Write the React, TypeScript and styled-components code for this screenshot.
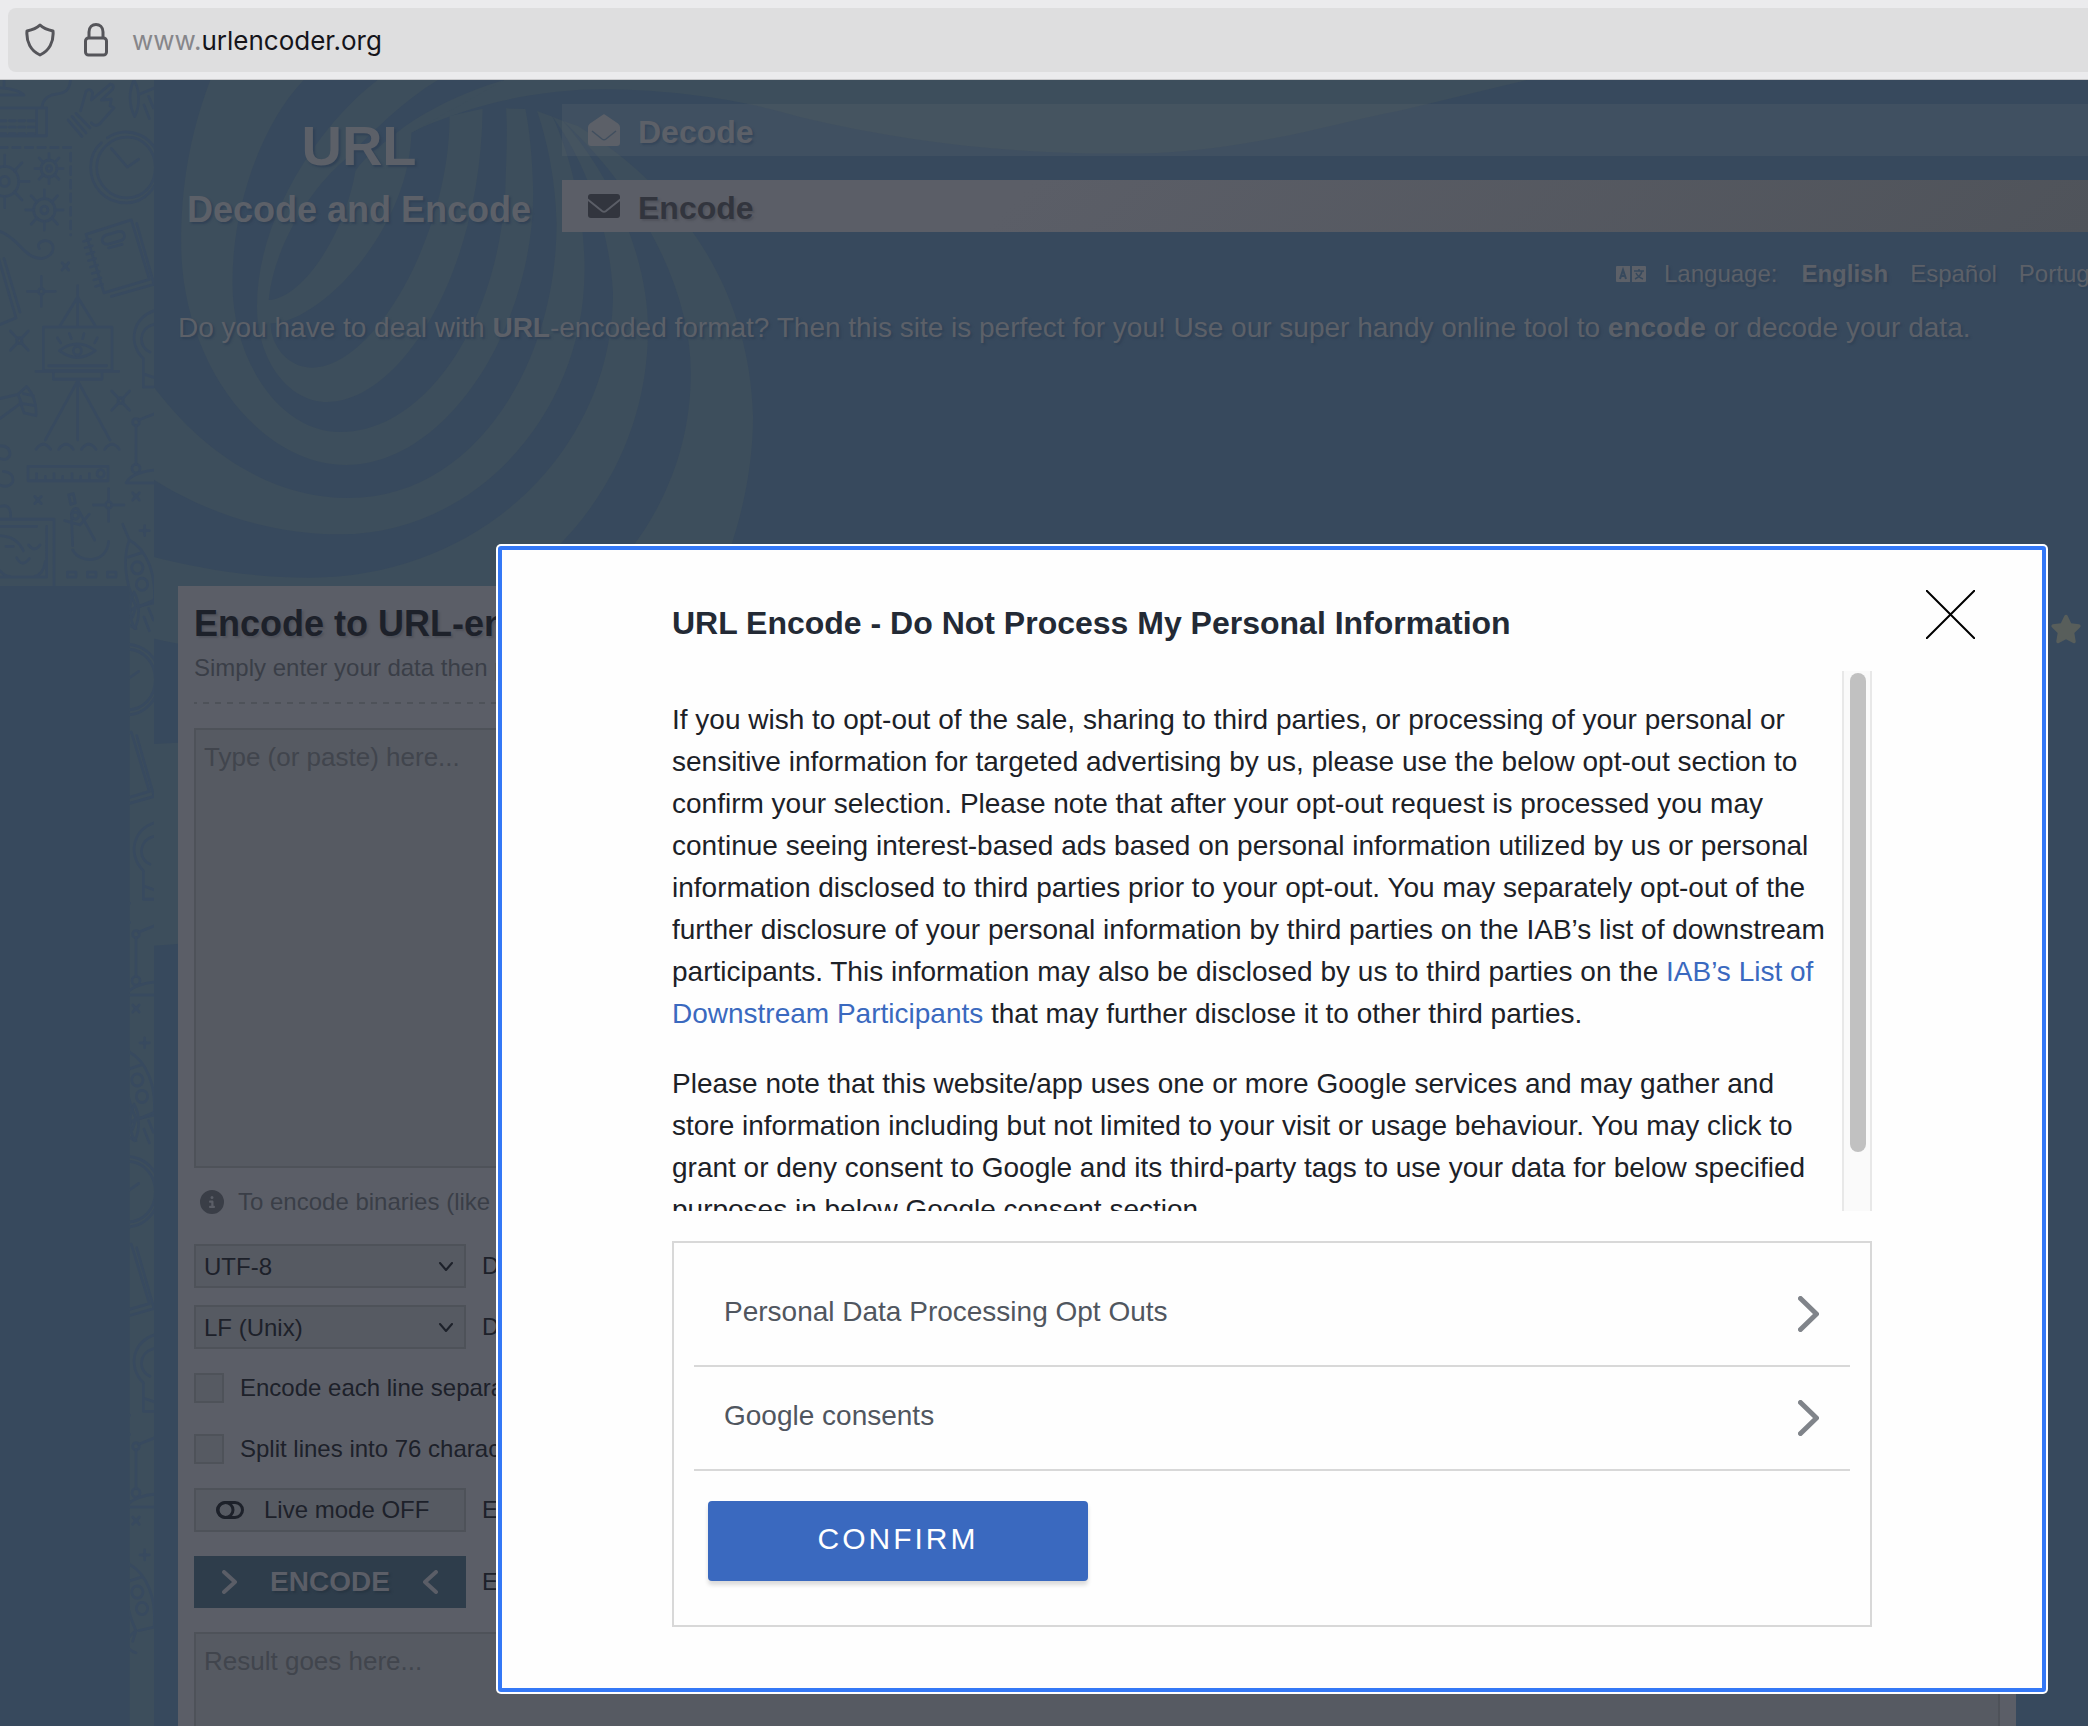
import React from "react";
import styled, { createGlobalStyle } from "styled-components";
import { FaCircleInfo, FaStar } from "react-icons/fa6";

const c = {
  page: "#37495d",
  art: "#3d4e5c",
  artLine: "#384a5f",
  panel: "#5b5e67",
  field: "#565a62",
  line: "#4e5259",
  muted: "#5c6068",
  shadow: "#314256",
  ink: "#1d212a",
  soft: "#3a3e47",
  placeholder: "#41454d",
  blue: "#3a69bf",
  rule: "#d8d8d8",
};

const GlobalStyle = createGlobalStyle`
  *, *::before, *::after { box-sizing: border-box; }
  html, body, #root { height: 100%; }
  body { margin: 0; overflow: hidden; font-family: "Liberation Sans", Arial, sans-serif; }
  h1, h2, p { margin: 0; }
  button, input, select, textarea { font: inherit; margin: 0; border-radius: 0; }
`;

const Window = styled.div`
  display: flex;
  flex-direction: column;
  height: 100vh;
`;

/* Browser bar */
const Toolbar = styled.div`
  flex: none;
  height: 80px;
  padding: 8px 0 7px 8px;
  background: #ebebed;
  border-bottom: 1px solid #c9c9cb;
`;
const AddressBox = styled.div`
  display: flex;
  align-items: center;
  height: 64px;
  padding-left: 17px;
  background: #dededf;
  border-radius: 8px 0 0 8px;
`;
const BarIcon = styled.svg`
  flex: none;
  fill: none;
  stroke: #55555a;
  stroke-width: 3;
  stroke-linejoin: round;
`;
const Address = styled.div`
  padding: 2px 0 0 24px;
  font-family: Inter, "Liberation Sans", sans-serif;
  font-size: 26px;
  line-height: 32px;
  color: #15141a;
`;
const Sub = styled.span`
  color: #86868a;
`;

/* Site */
const Site = styled.div`
  position: relative;
  flex: 1;
  min-height: 0;
  overflow: hidden;
  background: ${c.page};
`;
const Swirl = styled.svg`
  position: absolute;
  top: 0;
  left: 150px;
`;
const Doodles = styled.svg`
  position: absolute;
  top: 0;
  left: 0;
`;
const Content = styled.div`
  position: relative;
  padding: 24px 0 0 178px;
  white-space: nowrap;
`;
const Header = styled.header`
  display: flex;
  gap: 22px;
`;
const Brand = styled.div`
  flex: none;
  display: flex;
  flex-direction: column;
  align-items: center;
  gap: 10px;
  width: 362px;
  padding-top: 10px;
  font-weight: bold;
  color: ${c.muted};
  text-shadow: 2px 2px 2px ${c.shadow};
`;
const BrandName = styled.div`
  font-size: 56px;
  line-height: 64px;
`;
const BrandTag = styled.div`
  font-size: 36px;
  line-height: 44px;
`;
const Nav = styled.nav`
  flex: 1;
  display: flex;
  flex-direction: column;
  gap: 24px;
`;
const NavLink = styled.a<{ $active?: boolean }>`
  display: flex;
  align-items: center;
  gap: 18px;
  height: 52px;
  padding-left: 26px;
  font-size: 32px;
  line-height: 40px;
  font-weight: bold;
  text-decoration: none;
  color: ${(p) => (p.$active ? "#32353e" : c.muted)};
  background: ${(p) =>
    p.$active ? "linear-gradient(135deg, #5b5e67 0%, #5b5e67 30%, #4f535a 100%)" : "rgba(130, 130, 130, 0.12)"};
  text-shadow: 2px 2px 2px ${(p) => (p.$active ? "#50535c" : "#35465a")};
  span { padding-top: 4px; }
`;
const Languages = styled.div`
  display: flex;
  align-items: center;
  gap: 22px;
  width: 472px;
  margin: 26px 0 0 auto;
  overflow: hidden;
  font-size: 24px;
  line-height: 32px;
  color: ${c.muted};
  text-shadow: 2px 2px 2px ${c.shadow};
`;
const LanguageTitle = styled.span`
  display: flex;
  align-items: center;
  gap: 18px;
  padding-right: 2px;
`;
const LanguageLink = styled.a<{ $active?: boolean }>`
  color: inherit;
  text-decoration: none;
  font-weight: ${(p) => (p.$active ? "bold" : "normal")};
`;
const Intro = styled.p`
  margin: 20px 0 240px;
  font-size: 28px;
  line-height: 36px;
  color: ${c.muted};
  text-shadow: 2px 2px 2px ${c.shadow};
`;
const Main = styled.div`
  display: flex;
  gap: 34px;
`;
const Aside = styled.div`
  flex: none;
  width: 38px;
  padding-top: 26px;
  color: #585e5b;
  svg { display: block; width: 32px; height: 34px; }
`;
const Panel = styled.main`
  flex: 1;
  min-width: 0;
  padding: 16px;
  background: ${c.panel};
  color: ${c.ink};
`;
const PanelTitle = styled.h1`
  font-size: 36px;
  line-height: 44px;
  text-shadow: 2px 2px 2px #50535c;
`;
const PanelNote = styled.p`
  padding-top: 6px;
  font-size: 24px;
  line-height: 32px;
  color: ${c.soft};
`;
const Dashes = styled.div`
  height: 2px;
  margin: 18px 0 24px;
  background: repeating-linear-gradient(90deg, ${c.line} 0 6px, transparent 6px 12px) -3px 0;
`;
const TextField = styled.textarea`
  display: block;
  width: 100%;
  height: 440px;
  padding: 10px 8px;
  border: 2px solid ${c.line};
  background: ${c.field};
  color: ${c.ink};
  font-size: 26px;
  line-height: 34px;
  resize: none;
  outline: none;
  &::placeholder { color: ${c.placeholder}; opacity: 1; }
`;
const Info = styled.p`
  display: flex;
  align-items: center;
  gap: 14px;
  margin: 18px 0 26px;
  padding-left: 6px;
  font-size: 24px;
  line-height: 32px;
  color: ${c.soft};
`;
const Options = styled.div`
  display: grid;
  gap: 17px;
  margin-bottom: 24px;
  font-size: 24px;
`;
const Row = styled.div`
  display: flex;
  align-items: center;
  gap: 16px;
  min-height: 44px;
  font-size: 24px;
`;
const SelectWrap = styled.div`
  position: relative;
  width: 272px;
  svg {
    position: absolute;
    right: 12px;
    top: 18px;
    pointer-events: none;
  }
`;
const Select = styled.select`
  display: block;
  width: 100%;
  height: 44px;
  padding: 0 8px;
  border: 2px solid ${c.line};
  background: ${c.field};
  color: ${c.ink};
  appearance: none;
`;
const Check = styled.input`
  appearance: none;
  width: 30px;
  height: 30px;
  border: 2px solid ${c.line};
  background: ${c.field};
`;
const LiveButton = styled.button`
  display: flex;
  align-items: center;
  gap: 20px;
  width: 272px;
  height: 44px;
  padding: 0 0 0 20px;
  border: 2px solid ${c.line};
  background: ${c.field};
  color: ${c.ink};
`;
const EncodeButton = styled.button`
  display: flex;
  align-items: center;
  justify-content: space-between;
  width: 272px;
  height: 52px;
  padding: 0 28px;
  border: 0;
  background: #2e3d4b;
  color: ${c.panel};
  font-size: 28px;
  font-weight: bold;
  text-shadow: 2px 2px 2px #283643;
`;
const EncodeRow = styled(Row)`
  margin-bottom: 24px;
`;

/* Dialog */
const Overlay = styled.div`
  position: absolute;
  inset: 0;
  display: flex;
  padding: 466px 42px 34px 498px;
`;
const Dialog = styled.section`
  position: relative;
  flex: 1;
  min-width: 0;
  display: flex;
  flex-direction: column;
  padding: 53px 170px 61px;
  border: 4px solid #3478f6;
  border-radius: 3px;
  box-shadow: 0 0 0 2px #fff;
  background: #fefefe;
  color: #1c2127;
`;
const CloseButton = styled.button`
  position: absolute;
  top: 40px;
  right: 67px;
  padding: 0;
  border: 0;
  background: none;
  svg { display: block; }
`;
const DialogTitle = styled.h2`
  margin-bottom: 28px;
  font-size: 32px;
  line-height: 40px;
  color: #232a35;
`;
const Scroller = styled.div`
  flex: 1;
  min-height: 0;
  display: flex;
  margin-bottom: 30px;
`;
const Copy = styled.div`
  flex: 1;
  min-width: 0;
  overflow: hidden;
  padding-right: 12px;
  font-size: 28px;
  line-height: 42px;
  p { margin-top: 28px; }
  a { color: ${c.blue}; text-decoration: none; }
`;
const Track = styled.div`
  flex: none;
  width: 30px;
  padding: 2px 4px 0 6px;
  border: solid #e8e8e8;
  border-width: 0 2px;
  background: #fafafa;
`;
const Thumb = styled.div`
  width: 16px;
  height: 89%;
  border-radius: 8px;
  background: #c1c1c1;
`;
const Choices = styled.div`
  padding: 20px 20px 44px;
  border: 2px solid ${c.rule};
`;
const Choice = styled.button`
  display: flex;
  align-items: center;
  justify-content: space-between;
  width: 100%;
  height: 104px;
  padding: 0 31px 0 30px;
  border: 0;
  border-bottom: 2px solid ${c.rule};
  background: none;
  color: #50565f;
  font-size: 28px;
  line-height: 36px;
  span { padding-bottom: 4px; }
`;
const Confirm = styled.button`
  display: block;
  width: 380px;
  height: 80px;
  margin: 30px 0 0 14px;
  padding: 0 0 4px;
  border: 0;
  border-radius: 4px;
  background: ${c.blue};
  box-shadow: 0 4px 4px rgba(0, 0, 0, 0.14);
  color: #fff;
  font-size: 30px;
  letter-spacing: 3px;
`;

const SwirlArt = () => (
  <Swirl width="1380" height="870" viewBox="0 12 3547 2610" preserveAspectRatio="none" aria-hidden="true">
    <g fill={c.art}>
      <path d="M910 12C800 50 700 110 640 165L670 170C720 140 770 122 805 107C930 60 1050 40 1170 40C1370 42 1540 78 1670 123C2000 215 2300 240 2590 231C2850 215 3050 140 3212 104L3539 12Z" />
      <path d="M585 12C440 140 275 420 275 690C275 860 360 978 455 978C640 978 850 600 855 98L770 120C770 470 580 875 415 875C355 875 310 810 310 742C430 745 665 470 672 170L910 12Z" />
      <path d="M155 12C100 180 80 340 80 500C80 860 280 1167 505 1167C760 1167 985 760 985 350C983 240 975 160 965 99L915 97C920 170 915 260 913 350C890 760 700 1068 490 1068C330 1068 212 850 212 620C212 380 290 140 395 12Z" />
      <path d="M0 918C140 1140 320 1266 510 1266C830 1266 1045 870 1045 440C1042 310 1022 200 995 105L1035 122C1085 250 1117 420 1117 580C1117 1020 830 1375 490 1375C310 1375 140 1310 0 1204Z" />
      <path d="M0 1440C130 1480 270 1505 410 1505C850 1505 1190 1120 1190 650C1180 450 1120 260 1035 122L1062 135C1200 320 1280 560 1280 760C1280 1290 900 1700 420 1730C260 1735 120 1720 0 1685Z" />
      <path d="M1062 135C1270 360 1390 650 1390 890C1390 1480 900 1950 0 2005V2610C1000 2540 1550 1700 1550 1020C1540 620 1350 330 1100 150Z" />
    </g>
    <path
      fill={c.page}
      d="M740 12H910C800 50 700 110 640 165C590 210 550 245 528 285C500 480 390 668 305 672C320 500 420 330 500 252C570 170 650 75 740 12Z"
    />
  </Swirl>
);

const Gear = ({ x, y, r }: { x: number; y: number; r: number }) => (
  <g transform={`translate(${x} ${y})`}>
    <circle r={r} />
    <circle r={r / 3} />
    {[0, 45, 90, 135, 180, 225, 270, 315].map((a) => (
      <path key={a} d={`M0 ${-r}V${-r * 1.75}`} transform={`rotate(${a})`} />
    ))}
  </g>
);

const Spark = ({ x, y, r, turn = 0 }: { x: number; y: number; r: number; turn?: number }) => (
  <g transform={`translate(${x} ${y}) rotate(${turn})`}>
    <circle r={r / 5} />
    <path d={`M0 ${-r}V${-r / 5}M0 ${r / 5}V${r}M${-r} 0H${-r / 5}M${r / 5} 0H${r}`} />
  </g>
);

const DoodleTile = () => (
  <g id="tile" fill="none" stroke={c.artLine} strokeWidth="8" strokeLinecap="round" strokeLinejoin="round">
    <path d="M12 56V78M-20 98H72C60 86 40 80 0 78M212 40C214 100 180 92 155 98C138 104 128 116 126 130M-10 134H140V212H-10M110 134V212" />
    <path strokeDasharray="18 10" d="M0 170H104M0 188H104M0 206H104" />
    <path d="M242 142L258 88Q270 76 278 92L274 112L330 68Q346 70 338 82L304 112L334 110L330 128L342 134L298 180Q284 188 274 176M204 168L246 214M216 158L258 204M228 150L270 190" />
    <path d="M402 56C384 90 388 130 404 158C420 130 420 84 402 56M418 96L470 76M432 126L448 164M446 102L460 134" />
    <path d="M322 218C380 180 470 210 480 290C480 360 430 400 380 400C310 400 272 350 272 300C272 270 284 248 304 232M382 216C332 216 290 254 290 300C290 346 330 386 380 386C430 386 466 350 466 300C466 254 430 216 382 216M334 248L382 300L416 278" />
    <path strokeDasharray="22 16" d="M0 245H212V490" />
    <Gear x={14} y={340} r={42} />
    <Gear x={147} y={304} r={24} />
    <Gear x={133} y={420} r={32} />
    <path d="M0 480C60 500 70 556 126 556C170 550 168 504 134 506C116 508 112 520 118 528M-6 550L48 722L-4 742M12 556L60 706" />
    <path d="M258 488L394 448L448 614L312 652ZM410 458L462 628L334 662M326 488L356 480C376 478 380 502 362 506L322 516C300 516 302 492 326 488M326 526L366 516" />
    <path strokeWidth="7" d="M250 508L272 502M255 526L277 520M260 544L282 538M265 562L287 556M271 580L293 574M276 598L298 592M281 616L303 610M286 634L308 628" />
    <Spark x={124} y={648} r={42} />
    <Spark x={58} y={786} r={38} turn={45} />
    <Spark x={196} y={578} r={14} turn={45} />
    <path d="M233 632V742M233 664L180 744M233 664L286 744M130 748H336V870H130ZM146 856H320M108 872H356M160 878V894H306V878M233 898V1064M233 898L136 1064M233 898L330 1064" />
    <path d="M178 814Q232 776 286 814Q232 852 178 814M172 778L182 792M208 766L214 780M252 766L248 780M292 778L284 792" />
    <circle cx="232" cy="814" r="12" />
    <path d="M470 700C400 716 380 790 430 836V916H470M462 740C412 752 416 806 450 818M434 880L470 892M0 948L54 936L64 960L0 1004M54 936L80 914Q112 950 108 996L72 988L60 956M70 934L100 940M68 962L106 968" />
    <Spark x={362} y={954} r={38} turn={45} />
    <path d="M108 1090Q130 1062 152 1090M176 1090Q198 1062 220 1090M244 1090Q266 1062 288 1090M314 1090Q336 1062 358 1090M84 1138H324V1178H84ZM110 1176V1158M136 1176V1166M162 1176V1158M188 1176V1166M216 1176V1158M242 1176V1166M268 1176V1158" />
    <circle cx="302" cy="1158" r="11" />
    <circle cx="408" cy="1014" r="10" />
    <circle cx="408" cy="1144" r="12" />
    <path d="M408 1024V1132M416 1008L470 988M378 1184H470M380 1182C392 1160 440 1148 470 1148M0 1080Q30 1080 30 1104Q24 1124 0 1116M10 1152Q44 1156 38 1182Q24 1200 0 1190" />
    <Spark x={326} y={1246} r={46} />
    <Spark x={114} y={1232} r={14} turn={45} />
    <Spark x={408} y={1222} r={14} turn={45} />
    <Spark x={434} y={1318} r={14} />
    <path d="M0 1250Q34 1240 32 1282M0 1286H162V1474M0 1306H110M140 1306V1448H0M0 1332Q50 1334 70 1374M18 1362H40M86 1358Q104 1380 120 1358M50 1394Q66 1422 88 1396M0 1430Q14 1446 30 1446M136 1404Q130 1440 104 1446" />
    <path d="M206 1218L220 1214L226 1240L212 1244ZM214 1268Q222 1250 234 1258L284 1344M214 1268L218 1360M194 1290L240 1302L268 1272M218 1372C240 1410 320 1412 326 1348" />
    <circle cx="226" cy="1276" r="10" />
    <path d="M202 1434H228V1448H202ZM262 1434H288V1448H262ZM322 1434H348V1448H322Z" />
    <path d="M368 1300L388 1344C366 1400 378 1470 408 1530C350 1570 400 1590 408 1592M388 1344C440 1370 470 1440 462 1520L416 1530M384 1392L424 1380M408 1530L398 1560" />
    <circle cx="412" cy="1422" r="17" />
    <circle cx="426" cy="1468" r="17" />
  </g>
);

const DoodleArt = () => (
  <Doodles width="154" height="1646" viewBox="0 56 462 4609" preserveAspectRatio="none" aria-hidden="true">
    <defs>
      <clipPath id="upper">
        <path d="M0 56H462V1473H0Z" />
      </clipPath>
      <clipPath id="lower">
        <path d="M389 1473H462V4665H389Z" />
      </clipPath>
    </defs>
    <path fill={c.art} d="M0 56H462V4665H389V1473H0Z" />
    <g clipPath="url(#upper)">
      <DoodleTile />
    </g>
    <g clipPath="url(#lower)">
      <use href="#tile" />
      <use href="#tile" y="1434" />
      <use href="#tile" y="2868" />
    </g>
  </Doodles>
);

const LanguageMark = () => (
  <svg width="30" height="16" fill="none" stroke={c.page} strokeWidth="2" aria-hidden="true">
    <path fill={c.muted} stroke="none" d="M1 0H14V16H1Q0 16 0 15V1Q0 0 1 0ZM16 0H29Q30 0 30 1V15Q30 16 29 16H16Z" />
    <path d="M4 13L7 4L10 13M5 10H9" />
    <path strokeWidth="1.500" d="M18 5H28M23 3V5M26 5Q25 10 19 13M20 7Q22 11 27 13" />
  </svg>
);

const Chevron = ({ w, h, stroke, width, flip }: { w: number; h: number; stroke: string; width: number; flip?: boolean }) => {
  const p = width / 2;
  const d = flip
    ? `M${w - p} ${p}L${p} ${h / 2}L${w - p} ${h - p}`
    : `M${p} ${p}L${w - p} ${h / 2}L${p} ${h - p}`;
  return (
    <svg width={w} height={h} fill="none" stroke={stroke} strokeWidth={width} strokeLinecap="round" strokeLinejoin="round" aria-hidden="true">
      <path d={d} />
    </svg>
  );
};

const DownMark = () => (
  <svg width="16" height="10" fill="none" stroke={c.ink} strokeWidth="2" strokeLinecap="round" strokeLinejoin="round" aria-hidden="true">
    <path d="M2 1L8 8L14 1" />
  </svg>
);

function OptionSelect({ id, value, label }: { id: string; value: string; label: string }) {
  return (
    <Row>
      <SelectWrap>
        <Select id={id} defaultValue={value}>
          <option>{value}</option>
        </Select>
        <DownMark />
      </SelectWrap>
      <label htmlFor={id}>{label}</label>
    </Row>
  );
}

function OptionCheck({ id, label }: { id: string; label: string }) {
  return (
    <Row>
      <Check id={id} type="checkbox" />
      <label htmlFor={id}>{label}</label>
    </Row>
  );
}

export default function App() {
  return (
    <Window>
      <GlobalStyle />
      <Toolbar>
        <AddressBox>
          <BarIcon width="30" height="34" viewBox="0 0 30 34" aria-hidden="true">
            <path d="M15 2C18 5 23 7 28 8C29 19 24 28 15 32C6 28 1 19 2 8C7 7 12 5 15 2Z" />
          </BarIcon>
          <BarIcon width="53" height="34" viewBox="-29 0 53 34" aria-hidden="true">
            <path d="M5 15V9C5 -1 19 -1 19 9V15" />
            <rect x="1.5" y="15" width="21" height="17" rx="3" />
          </BarIcon>
          <Address>
            <Sub>www.</Sub>urlencoder.org
          </Address>
        </AddressBox>
      </Toolbar>

      <Site>
        <SwirlArt />
        <DoodleArt />
        <Content>
          <Header>
            <Brand>
              <BrandName>URL</BrandName>
              <BrandTag>Decode and Encode</BrandTag>
            </Brand>
            <Nav>
              <NavLink href="#decode">
                <svg width="32" height="32" aria-hidden="true">
                  <path fill="currentColor" d="M14.500 1Q16 -.5 17.500 1L30 9.500Q32 11 32 13V29Q32 32 29 32H3Q0 32 0 29V13Q0 11 2 9.500Z" />
                  <path fill="none" stroke="#414f5f" strokeWidth="1.500" d="M4 17L14 25Q16 26.500 18 25L28 17" />
                </svg>
                <span>Decode</span>
              </NavLink>
              <NavLink href="#encode" $active>
                <svg width="32" height="24" aria-hidden="true">
                  <rect width="32" height="24" rx="3" fill="currentColor" />
                  <path fill="none" stroke="#5b5e67" strokeWidth="2" d="M-1 5L14 17Q16 18.500 18 17L33 5" />
                </svg>
                <span>Encode</span>
              </NavLink>
            </Nav>
          </Header>

          <Languages>
            <LanguageTitle>
              <LanguageMark />
              Language:
            </LanguageTitle>
            <LanguageLink href="#en" $active>English</LanguageLink>
            <LanguageLink href="#es">Español</LanguageLink>
            <LanguageLink href="#pt">Português</LanguageLink>
          </Languages>

          <Intro>
            Do you have to deal with <b>URL</b>-encoded format? Then this site is perfect for you! Use our super handy
            online tool to <b>encode</b> or decode your data.
          </Intro>

          <Main>
            <Panel>
              <PanelTitle>Encode to URL-encoded format</PanelTitle>
              <PanelNote>Simply enter your data then push the encode button.</PanelNote>
              <Dashes />
              <TextField aria-label="Data to encode" placeholder="Type (or paste) here..." />
              <Info>
                <FaCircleInfo size={24} aria-hidden="true" />
                To encode binaries (like images, documents, etc.) use the file upload form.
              </Info>
              <Options>
                <OptionSelect id="charset" value="UTF-8" label="Destination character set." />
                <OptionSelect id="newline" value="LF (Unix)" label="Destination newline separator." />
                <OptionCheck id="lines" label="Encode each line separately." />
                <OptionCheck id="split" label="Split lines into 76 character wide chunks." />
                <Row>
                  <LiveButton type="button">
                    <svg width="28" height="18" fill="none" stroke="currentColor" strokeWidth="3" aria-hidden="true">
                      <rect x="1.500" y="1.500" width="25" height="15" rx="7.500" />
                      <circle cx="9.500" cy="9" r="7.500" />
                    </svg>
                    Live mode OFF
                  </LiveButton>
                  <span>Encodes in real-time as you type.</span>
                </Row>
              </Options>
              <EncodeRow>
                <EncodeButton type="button">
                  <Chevron w={15} h={24} stroke={c.panel} width={4} />
                  ENCODE
                  <Chevron w={15} h={24} stroke={c.panel} width={4} flip />
                </EncodeButton>
                <span>Encodes your data into the area below.</span>
              </EncodeRow>
              <TextField aria-label="Result" placeholder="Result goes here..." readOnly />
            </Panel>
            <Aside>
              <FaStar aria-hidden="true" />
            </Aside>
          </Main>
        </Content>

        <Overlay>
          <Dialog role="dialog" aria-labelledby="dialog-title">
            <CloseButton type="button" aria-label="Close">
              <svg width="49" height="49" stroke="#000" strokeWidth="2" aria-hidden="true">
                <path d="M0 0L49 49M49 0L0 49" />
              </svg>
            </CloseButton>
            <DialogTitle id="dialog-title">URL Encode - Do Not Process My Personal Information</DialogTitle>
            <Scroller>
              <Copy>
                <p>
                  If you wish to opt-out of the sale, sharing to third parties, or processing of your personal or
                  sensitive information for targeted advertising by us, please use the below opt-out section to confirm
                  your selection. Please note that after your opt-out request is processed you may continue seeing
                  interest-based ads based on personal information utilized by us or personal information disclosed to
                  third parties prior to your opt-out. You may separately opt-out of the further disclosure of your
                  personal information by third parties on the IAB’s list of downstream participants. This information
                  may also be disclosed by us to third parties on the{" "}
                  <a href="#participants">IAB’s List of Downstream Participants</a> that may further disclose it to
                  other third parties.
                </p>
                <p>
                  Please note that this website/app uses one or more Google services and may gather and store
                  information including but not limited to your visit or usage behaviour. You may click to grant or deny
                  consent to Google and its third-party tags to use your data for below specified purposes in below
                  Google consent section.
                </p>
              </Copy>
              <Track>
                <Thumb />
              </Track>
            </Scroller>
            <Choices>
              <Choice type="button">
                <span>Personal Data Processing Opt Outs</span>
                <Chevron w={21} h={36} stroke="#80848a" width={5} />
              </Choice>
              <Choice type="button">
                <span>Google consents</span>
                <Chevron w={21} h={36} stroke="#80848a" width={5} />
              </Choice>
              <Confirm type="button">CONFIRM</Confirm>
            </Choices>
          </Dialog>
        </Overlay>
      </Site>
    </Window>
  );
}
